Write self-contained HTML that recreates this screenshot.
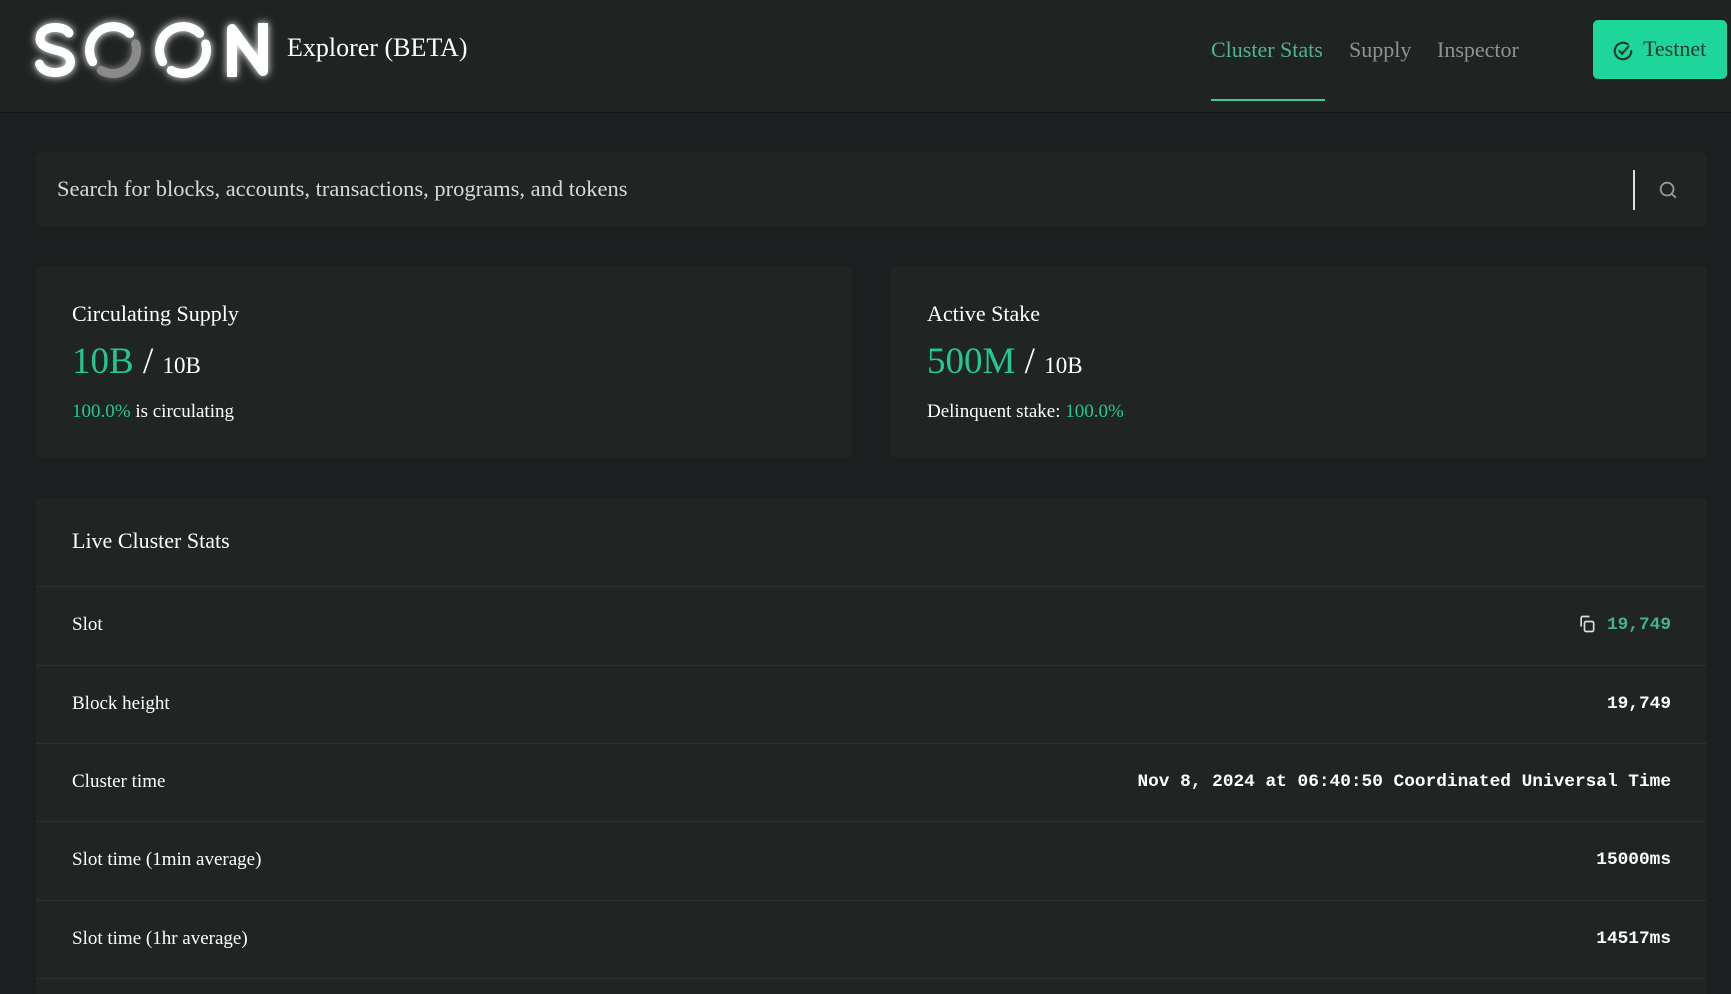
<!DOCTYPE html>
<html style="height:994px;overflow:hidden"><head><meta charset="utf-8"><style>
*{margin:0;padding:0;box-sizing:border-box}
body{width:1731px;height:994px;overflow:hidden;background:#1b1f1f;font-family:"Liberation Serif",serif;color:#fff;position:relative}
.hdr{position:absolute;left:0;top:0;width:1731px;height:113px;background:#1f2423;border-bottom:1px solid #141717}
.abs{position:absolute}
.nav{font-size:22px;top:37px;color:#8b9490}
.card{position:absolute;background:#202524;border-radius:6px}
.row{position:absolute;left:0;width:1671px;height:78px;border-top:1px solid #2a302f}
.row .l{position:absolute;left:36px;top:27px;font-size:19px}
.row .v{position:absolute;right:36px;top:28px;font-family:"Liberation Mono",monospace;font-weight:bold;font-size:17.8px}
.g{color:#22c98e}
</style></head><body>
<div class="hdr">
<svg class="abs" style="left:0;top:0" width="290" height="100" viewBox="0 0 290 100">
<defs><filter id="gl" x="-30%" y="-40%" width="160%" height="180%"><feGaussianBlur stdDeviation="4" result="b"/><feMerge><feMergeNode in="b"/><feMergeNode in="SourceGraphic"/></feMerge></filter></defs>
<g filter="url(#gl)" fill="none" stroke-width="9" stroke-linecap="round">
<path d="M69 33 C66 29 61 27.5 55 27.5 C46 27.5 40 32 40 38.5 C40 46 48 48 55 50 C64 52 70.5 55 70.5 62 C70.5 68.5 64 72.5 55 72.5 C47 72.5 41 69 39.5 64" stroke="#fff"/>
<path d="M129.6 33.4 A23.5 23.5 0 0 0 92.65 61.75" stroke="#fff"/>
<path d="M135.7 43.9 A23.5 23.5 0 0 1 101.25 70.35" stroke="#8a8a8a"/>
<path d="M199.6 33.4 A23.5 23.5 0 0 0 162.65 61.75" stroke="#fff"/>
<path d="M205.7 43.9 A23.5 23.5 0 0 1 171.25 70.35" stroke="#fff"/>
<path d="M232 77 V29 L263 71 V23" stroke="#fff" stroke-linecap="butt" stroke-linejoin="round" stroke-width="10"/>
</g></svg>
<div class="abs" style="left:287px;top:33px;font-size:26px">Explorer (BETA)</div>
<div class="abs nav" style="left:1211px;color:#4fb48e">Cluster Stats</div>
<div class="abs" style="left:1211px;top:99px;width:114px;height:2px;background:#3ec796"></div>
<div class="abs nav" style="left:1349px">Supply</div>
<div class="abs nav" style="left:1437px">Inspector</div>
<div class="abs" style="left:1593px;top:20px;width:134px;height:59px;background:#1fd69a;border-radius:5px;color:#1f3a30;font-size:22px">
<svg class="abs" style="left:19px;top:20px" width="22" height="22" viewBox="0 0 24 24" fill="none" stroke="#1f3a30" stroke-width="2.4" stroke-linecap="round"><path d="M21 12a9 9 0 1 1-4-7.5"/><path d="M8 12l3 3 7-8"/></svg>
<span class="abs" style="left:50px;top:16px">Testnet</span></div>
</div>
<div class="card" style="left:36px;top:152px;width:1671px;height:75px">
<div class="abs" style="left:21px;top:24px;font-size:22.5px;color:#d6d9d8">Search for blocks, accounts, transactions, programs, and tokens</div>
<div class="abs" style="left:1597px;top:18px;width:2px;height:40px;background:#ddd"></div>
<svg class="abs" style="left:1621px;top:27px" width="22" height="22" viewBox="0 0 24 24" fill="none" stroke="#999" stroke-width="2" stroke-linecap="round"><circle cx="11" cy="11" r="7"/><path d="M16 16l4 4"/></svg>
</div>
<div class="card" style="left:36px;top:266px;width:816px;height:192px">
<div class="abs" style="left:36px;top:35px;font-size:22px">Circulating Supply</div>
<div class="abs" style="left:36px;top:74px;font-size:37px"><span class="g">10B</span> / <span style="font-size:23px">10B</span></div>
<div class="abs" style="left:36px;top:135px;font-size:19px"><span class="g">100.0%</span> is circulating</div>
</div>
<div class="card" style="left:891px;top:266px;width:816px;height:192px">
<div class="abs" style="left:36px;top:35px;font-size:22px">Active Stake</div>
<div class="abs" style="left:36px;top:74px;font-size:37px"><span class="g">500M</span> / <span style="font-size:23px">10B</span></div>
<div class="abs" style="left:36px;top:135px;font-size:19px">Delinquent stake: <span class="g">100.0%</span></div>
</div>
<div class="card" style="left:36px;top:497px;width:1671px;height:497px;border-radius:6px 6px 0 0;overflow:hidden">
<div class="abs" style="left:36px;top:31px;font-size:22px">Live Cluster Stats</div>
<div class="row" style="top:89px"><div class="l">Slot</div><div class="v" style="color:#3fb58b"><svg style="position:absolute;left:-30px;top:-1px" width="20" height="20" viewBox="0 0 24 24" fill="none" stroke="#ddd" stroke-width="2"><rect x="9" y="9" width="11" height="12" rx="2"/><path d="M5 15V5a2 2 0 0 1 2-2h8"/></svg>19,749</div></div>
<div class="row" style="top:168px"><div class="l">Block height</div><div class="v">19,749</div></div>
<div class="row" style="top:246px"><div class="l">Cluster time</div><div class="v">Nov 8, 2024 at 06:40:50 Coordinated Universal Time</div></div>
<div class="row" style="top:324px"><div class="l">Slot time (1min average)</div><div class="v">15000ms</div></div>
<div class="row" style="top:403px"><div class="l">Slot time (1hr average)</div><div class="v">14517ms</div></div>
<div class="row" style="top:481px;height:16px"></div>
</div>
</body></html>
